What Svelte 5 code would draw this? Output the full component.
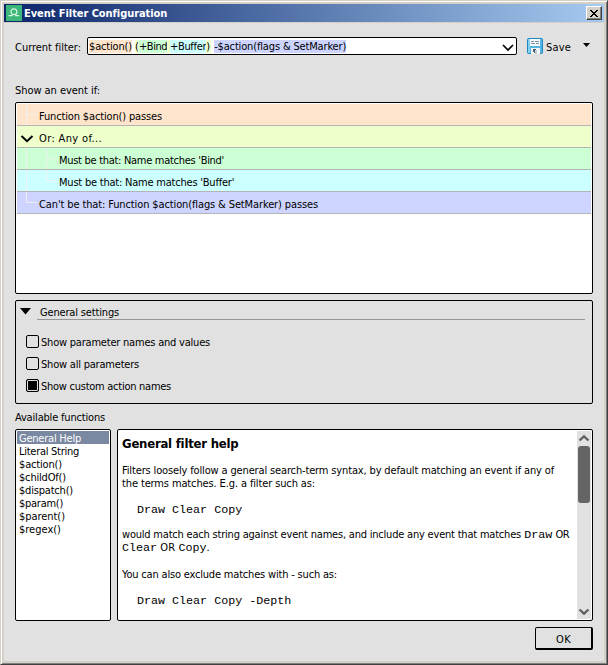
<script>
  const rows = [
    { text: 'Function $action() passes', tone: 'peach', w: 123 },
    { text: 'Or: Any of...', tone: 'lime', w: 63, open: true },
    { text: "Must be that: Name matches 'Bind'", tone: 'green', child: true, w: 165 },
    { text: "Must be that: Name matches 'Buffer'", tone: 'cyan', child: true, last: true, w: 175 },
    { text: "Can't be that: Function $action(flags & SetMarker) passes", tone: 'blue', last: true, w: 279 }
  ];
  const settings = [
    { text: 'Show parameter names and values', w: 169, on: false },
    { text: 'Show all parameters', w: 98, on: false },
    { text: 'Show custom action names', w: 130, on: true }
  ];
  const functions = [
    ['General Help', 62],
    ['Literal String', 60],
    ['$action()', 43],
    ['$childOf()', 47],
    ['$dispatch()', 54],
    ['$param()', 44],
    ['$parent()', 46],
    ['$regex()', 42]
  ];

  function fit(node, width) {
    const natural = node.getBoundingClientRect().width;
    node.style.letterSpacing = `${(width - natural) / node.textContent.length}px`;
  }
</script>

<main class="window">
  <header class="titlebar">
    <svg class="app" width="16" height="16" viewBox="0 0 16 16">
      <rect width="16" height="16" fill="#3cb779" />
      <path d="M2.500 10.700H6V9.500M13 10.700H9.800V9.500" fill="none" stroke="#d5f3e2" stroke-width="1.200" />
      <circle cx="7.900" cy="6.800" r="2.900" fill="none" stroke="#d5f3e2" stroke-width="1.200" />
    </svg>
    <h1><span use:fit={143}>Event Filter Configuration</span></h1>
    <button class="close" aria-label="Close">
      <svg width="8" height="7" viewBox="0 0 8 7" shape-rendering="crispEdges"><path d="M0 0h2v1h1v1h2V1h1V0h2v1H7v1H6v1H5v1h1v1h1v1h1v1H6V6H5V5H3v1H2v1H0V6h1V5h1V4h1V3H2V2H1V1H0z" /></svg>
    </button>
  </header>

  <div class="body">
    <div class="filter">
      <span class="caption"><span use:fit={66}>Current filter:</span></span>
      <div class="combo">
        <span class="tok peach" use:fit={43}>$action()</span><span class="gap"></span><span class="tok lime" use:fit={4}>(</span><span class="tok green" use:fit={28}>+Bind</span><span class="tok lime sp"></span><span class="tok cyan" use:fit={36}>+Buffer</span><span class="tok lime" use:fit={5}>)</span><span class="gap"></span><span class="tok blue" use:fit={132}>-$action(flags &amp; SetMarker)</span>
        <svg class="chev" width="12" height="8" viewBox="0 0 12 8"><path d="M1 1l5 5 5-5" fill="none" stroke="#000" stroke-width="1.6" /></svg>
      </div>
      <button class="save">
        <svg width="16" height="16" viewBox="0 0 16 16">
          <rect x=".5" y=".5" width="15" height="15" rx="1" fill="#55b5e2" stroke="#2386bd" />
          <rect x="1" y="1" width="2" height="14" fill="#83d0ef" />
          <rect x="3" y="1" width="10" height="7" fill="#f5fbff" />
          <path d="M4 3.5h3m1 0h4M4 5.5h4m1 0h3" stroke="#82919b" />
          <rect x="4" y="10" width="9" height="6" fill="#f1f4f6" />
          <path d="M6 11h3v4H7v-1H6z" fill="#50606c" />
          <rect x="8" y="12" width="2" height="4" fill="#c0cbd2" />
        </svg>
        <span class="savetext" use:fit={25}>Save</span>
      </button>
      <svg class="more" width="7" height="4" viewBox="0 0 7 4"><path d="M0 0h7L3.500 4z" /></svg>
    </div>

    <div class="caption if"><span use:fit={85}>Show an event if:</span></div>
    <div class="box tree">
      {#each rows as r}
        <div class="row {r.tone}" class:child={r.child}>
          {#if r.child}
            <svg class="lines" width="40" height="21" viewBox="0 0 40 21"><path d={r.last ? 'M9.5 0v21M29.5 0v10.500H38' : 'M9.5 0v21M29.5 0v21M29.5 10.500H38'} /></svg>
          {:else if r.open}
            <svg class="lines" width="20" height="21" viewBox="0 0 20 21"><path class="arrow" d="M4.500 10l5.500 5.200 5.500-5.200" /></svg>
          {:else}
            <svg class="lines" width="20" height="21" viewBox="0 0 20 21"><path d={r.last ? 'M9.5 0v10.500H20' : 'M9.5 0v21M9.500 10.500H20'} /></svg>
          {/if}
          <span class="label" use:fit={r.w}>{r.text}</span>
        </div>
      {/each}
    </div>

    <section class="box settings">
      <div class="head">
        <svg width="11" height="7" viewBox="0 0 11 7"><path d="M0 0h11L5.500 6.500z" /></svg>
        <div class="rule"><span use:fit={79}>General settings</span></div>
      </div>
      {#each settings as s}
        <label class="check">
          <i class:on={s.on}></i><span use:fit={s.w}>{s.text}</span>
        </label>
      {/each}
    </section>

    <div class="caption avail"><span use:fit={90}>Available functions</span></div>
    <div class="panes">
      <div class="box funcs">
        {#each functions as [name, w], i}
          <div class="fn" class:selected={i === 0}><span use:fit={w}>{name}</span></div>
        {/each}
      </div>
      <div class="box help">
        <article>
          <h2><span use:fit={116}>General filter help</span></h2>
          <p><span use:fit={432}>Filters loosely follow a general search-term syntax, by default matching an event if any of</span><br /><span use:fit={193}>the terms matches. E.g. a filter such as:</span></p>
          <pre>Draw Clear Copy</pre>
          <p><span use:fit={399}>would match each string against event names, and include any event that matches</span> <code>Draw</code> <span use:fit={14}>OR</span><br /><code>Clear</code> <span use:fit={15}>OR</span> <code>Copy</code>.</p>
          <p><span use:fit={215}>You can also exclude matches with - such as:</span></p>
          <pre>Draw Clear Copy -Depth</pre>
        </article>
        <div class="scroll">
          <svg width="12" height="8" viewBox="0 0 12 8"><path d="M1.500 6.500L6 2.300l4.500 4.200" /></svg>
          <div class="thumb"></div>
          <svg class="down" width="12" height="8" viewBox="0 0 12 8"><path d="M1.500 1.500L6 5.700l4.500-4.200" /></svg>
        </div>
      </div>
    </div>
    <footer><button class="ok"><span use:fit={15}>OK</span></button></footer>
  </div>
</main>

<style>
  :global(body) { margin: 0; overflow: hidden; }
  .window {
    box-sizing: border-box; width: 608px; height: 665px;
    background: #d4d0c8; border: 1px solid; border-color: #d4d0c8 #404040 #404040 #d4d0c8;
    box-shadow: inset 1px 1px #fff, inset -1px -1px #808080;
    padding: 3px; color: #000;
    font: 11px/13px 'DejaVu Sans Condensed', 'DejaVu Sans', sans-serif; font-stretch: condensed;
  }
  span { white-space: pre; }
  button { font: inherit; color: inherit; padding: 0; margin: 0; border: 0; background: none; }
  .titlebar { display: flex; align-items: center; height: 18px; padding: 0 2px; background: linear-gradient(90deg, #0a246a, #a6caf0); }
  h1 { flex: 1; margin: 1px 0 0 2px; font-size: 11px; line-height: 15px; color: #fff; }
  .close { box-sizing: border-box; width: 16px; height: 14px; display: flex; align-items: center; justify-content: center; background: #d4d0c8; border: 1px solid; border-color: #fff #404040 #404040 #fff; box-shadow: inset -1px -1px #808080; }
  .body { box-sizing: border-box; height: 638px; margin-top: 1px; padding: 14px 11px 0; background: #e1e1e1; display: flex; flex-direction: column; }
  .filter { display: flex; height: 18px; align-items: center; }
  .caption { display: block; }
  .filter .caption { width: 72px; padding-top: 3px; }
  .combo { box-sizing: border-box; width: 430px; height: 18px; border: 1px solid #000; border-radius: 2px; background: #fff; display: flex; align-items: center; padding: 0 2px 0 1px; }
  .tok { display: block; height: 13px; line-height: 14px; }
  .gap { width: 3px; }
  .sp { width: 3px; }
  .chev { margin-left: auto; margin-top: 3px; }
  .save { display: flex; align-items: center; margin-left: 10px; gap: 3px; }
  .savetext { padding-top: 2px; }
  .more { margin-left: 12px; margin-top: -2px; }
  .if { margin-top: 29px; height: 18px; }
  .box { box-sizing: border-box; border: 1px solid #000; border-radius: 2px; }
  .tree { height: 192px; padding: 1px; background: #fff; flex: none; }
  .row { display: flex; height: 21px; border-bottom: 1px solid #b4b4b4; align-items: center; }
  .lines { flex: none; margin-right: 2px; }
  .label { padding-top: 3px; }
  .lines path { fill: none; stroke: #f0f0f0; }
  .lines .arrow { stroke: #000; stroke-width: 2; }
  .peach { background: #ffe5cc; } .lime { background: #eeffcc; } .green { background: #ccffd4; }
  .cyan { background: #ccffff; } .blue { background: #ccd4ff; }
  .settings { margin-top: 6px; height: 104px; padding: 3px 7px 0 4px; flex: none; }
  .head { display: flex; height: 26px; }
  .head svg { margin: 4px 6px 0 0; }
  .rule { flex: 1; height: 15px; border-bottom: 1px solid #969696; padding-left: 3px; line-height: 17px; }
  .check { display: flex; align-items: center; height: 22px; padding-left: 6px; gap: 2px; }
  .check span { padding-top: 2px; }
  .check i { box-sizing: border-box; width: 13px; height: 13px; border: 1px solid #000; border-radius: 2px; }
  .check .on { background: #000; box-shadow: inset 0 0 0 1px #e1e1e1; }
  .avail { margin-top: 7px; height: 18px; }
  .panes { display: flex; gap: 6px; height: 192px; }
  .funcs { width: 96px; padding: 1px; background: #fff; }
  .fn { height: 13px; line-height: 15px; padding-left: 2px; }
  .selected { background: #7a88a1; color: #fff; }
  .help { flex: 1; background: #fff; display: flex; padding: 1px; }
  article { flex: 1; min-width: 0; padding-left: 3px; overflow: hidden; }
  h2 { margin: 4px 0 12px; font-size: 13px; line-height: 17px; }
  p { margin: 0 0 14px; white-space: nowrap; }
  p, pre { line-height: 13px; }
  pre, code { font-family: 'Liberation Mono', monospace; font-size: 11.7px; }
  pre { margin: 0 0 11px; padding-left: 15px; }
  code { line-height: 12px; }
  .scroll { width: 14px; background: #e1e1e1; display: flex; flex-direction: column; align-items: center; padding: 3px 0; }
  .scroll path { fill: none; stroke: #606060; stroke-width: 2.3; }
  .thumb { width: 12px; height: 57px; margin-top: 4px; border-radius: 3px; background: #646464; }
  .down { margin-top: auto; }
  footer { display: flex; justify-content: flex-end; margin-top: 6px; }
  .ok { box-sizing: border-box; width: 58px; height: 23px; padding-top: 2px; border: 1px solid #000; border-bottom-width: 2px; border-right-width: 2px; border-radius: 2px; }
</style>
